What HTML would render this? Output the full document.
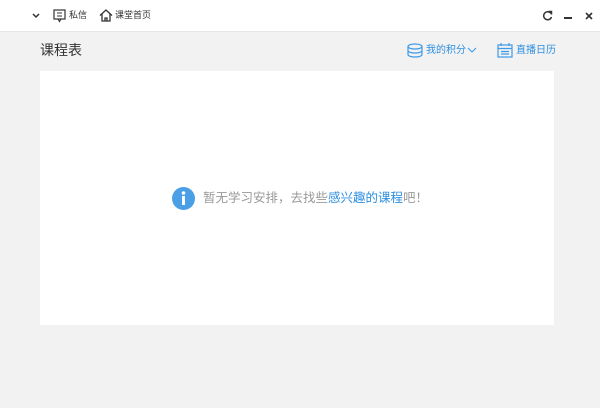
<!DOCTYPE html>
<html><head><meta charset="utf-8"><style>
body{margin:0;width:600px;height:408px;background:#f2f2f2;font-family:"Liberation Sans","Noto Sans CJK SC",sans-serif;position:relative;overflow:hidden}
.top{position:absolute;left:0;top:0;width:600px;height:31px;background:#fff;border-bottom:1px solid #e6e6e6}
.a{position:absolute;font-size:10px;color:#333;white-space:nowrap;line-height:1.2}
.panel{position:absolute;left:40px;top:71px;width:514px;height:254px;background:#fff}
</style></head><body>
<div class="top">
<svg style="position:absolute;left:32px;top:13px" width="8" height="6"><path d="M1 1L4 4L7 1" stroke="#333" stroke-width="1.5" fill="none"/></svg>
<svg style="position:absolute;left:53px;top:9px" width="13" height="14"><rect x="1" y="1" width="11" height="9" stroke="#333" stroke-width="1.2" fill="none"/><path d="M4 4h5M4 7h5M5 10l1.5 2.5L8 10" stroke="#333" stroke-width="1.1" fill="none"/></svg>
<div class="a" style="left:69px;top:10px;font-size:9px">私信</div>
<svg style="position:absolute;left:99px;top:9px" width="14" height="13"><path d="M1 6.5L7 1l6 5.5M3 5v7h8V5M6 12V9h2v3" stroke="#333" stroke-width="1.3" fill="none"/></svg>
<div class="a" style="left:115px;top:10px;font-size:9px">课堂首页</div>
<svg style="position:absolute;left:542px;top:10px" width="11" height="11"><path d="M9 3.5A4 4 0 1 0 9.5 7" stroke="#333" stroke-width="1.5" fill="none"/><path d="M6.5 1.5h3v3" stroke="#333" stroke-width="1.5" fill="none"/></svg>
<div style="position:absolute;left:564px;top:17px;width:8px;height:2px;background:#333"></div>
<svg style="position:absolute;left:585px;top:12px" width="8" height="8"><path d="M1 1l6 6M7 1l-6 6" stroke="#333" stroke-width="1.6"/></svg>
</div>
<div class="a" style="left:40px;top:42px;font-size:14px;color:#333">课程表</div>
<svg style="position:absolute;left:407px;top:43px" width="16" height="15"><ellipse cx="8" cy="3.5" rx="7" ry="2.5" stroke="#3d9ae8" stroke-width="1.2" fill="none"/><path d="M1 3.5v8c0 1.4 3 2.5 7 2.5s7-1.1 7-2.5v-8M1 7.5c0 1.4 3 2.5 7 2.5s7-1.1 7-2.5" stroke="#3d9ae8" stroke-width="1.2" fill="none"/></svg>
<div class="a" style="left:426px;top:45px;color:#2d8fe0">我的积分</div>
<svg style="position:absolute;left:467px;top:47px" width="10" height="6"><path d="M1 1l4 4 4-4" stroke="#3d9ae8" stroke-width="1.1" fill="none"/></svg>
<svg style="position:absolute;left:497px;top:43px" width="16" height="15"><rect x="1" y="2" width="14" height="12" stroke="#3d9ae8" stroke-width="1.2" fill="none"/><path d="M1 5.5h14M4 0v3M12 0v3M4 8.5h8M4 11h8" stroke="#3d9ae8" stroke-width="1.2"/></svg>
<div class="a" style="left:516px;top:45px;color:#2d8fe0">直播日历</div>
<div class="panel"></div>
<svg style="position:absolute;left:172px;top:187px" width="23" height="23"><circle cx="11.5" cy="11.5" r="11.5" fill="#4a9fe6"/><circle cx="11.5" cy="6" r="1.8" fill="#fff"/><rect x="10" y="9" width="3" height="9" fill="#fff"/></svg>
<div class="a" style="left:203px;top:191px;font-size:12.5px;color:#999">暂无学习安排，去找些<span style="color:#2d8fe0">感兴趣的课程</span>吧！</div>
</body></html>
